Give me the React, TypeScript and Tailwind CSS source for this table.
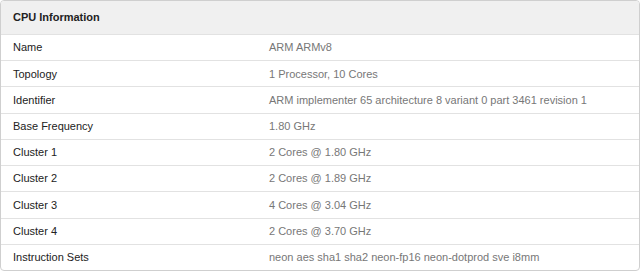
export default function App() {
  const rows = [
    ["Name", "ARM ARMv8"],
    ["Topology", "1 Processor, 10 Cores"],
    ["Identifier", "ARM implementer 65 architecture 8 variant 0 part 3461 revision 1"],
    ["Base Frequency", "1.80 GHz"],
    ["Cluster 1", "2 Cores @ 1.80 GHz"],
    ["Cluster 2", "2 Cores @ 1.89 GHz"],
    ["Cluster 3", "4 Cores @ 3.04 GHz"],
    ["Cluster 4", "2 Cores @ 3.70 GHz"],
    ["Instruction Sets", "neon aes sha1 sha2 neon-fp16 neon-dotprod sve i8mm"],
  ];

  return (
    <div
      className="w-[640px] h-[271px] bg-white"
      style={{ fontFamily: '"Liberation Sans", Arial, sans-serif' }}
    >
      <div className="h-[271px] flex flex-col border border-[#cfcfcf] rounded-[4px] overflow-hidden text-[11px]">
        <div className="h-[33px] shrink-0 bg-[#f0f0f0] flex items-center px-3 font-bold text-[#222]">
          CPU Information
        </div>
        {rows.map(([label, value], i) => (
          <div key={i} className="flex-1 border-t border-[#e2e2e2] flex items-center">
            <div className="w-[268px] pl-3 text-[#222]">{label}</div>
            <div className="text-[#777]">{value}</div>
          </div>
        ))}
      </div>
    </div>
  );
}
